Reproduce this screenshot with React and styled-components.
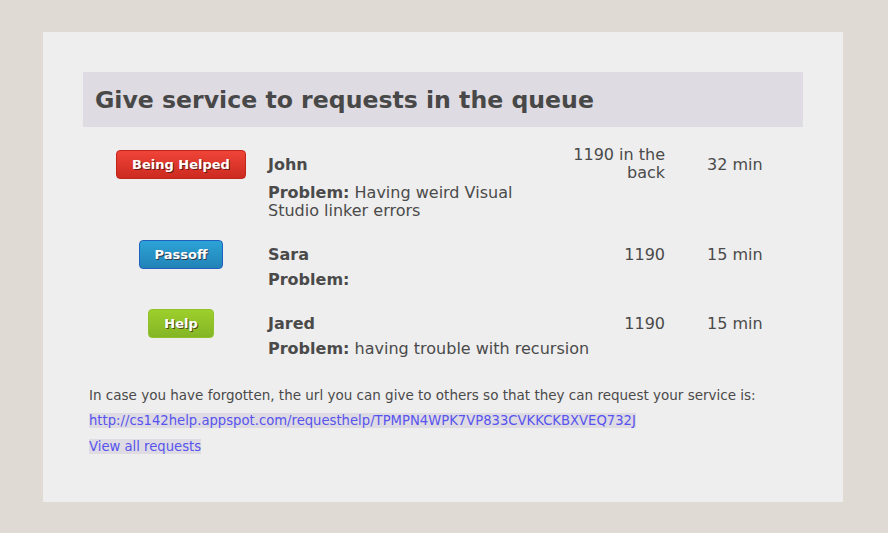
import React from 'react';
import styled, { createGlobalStyle, css } from 'styled-components';

const GlobalStyle = createGlobalStyle`
  body {
    margin: 0;
    background: #dfdbd4;
    font-family: "DejaVu Sans", Verdana, sans-serif;
    color: #4a4a4a;
  }
`;

const requests = [
  { status: 'helped', name: 'John', problem: 'Having weird Visual Studio linker errors', location: '1190 in the back', wait: '32 min', narrow: true },
  { status: 'passoff', name: 'Sara', problem: '', location: '1190', wait: '15 min' },
  { status: 'help', name: 'Jared', problem: 'having trouble with recursion', location: '1190', wait: '15 min' },
];

const labels = { helped: 'Being Helped', passoff: 'Passoff', help: 'Help' };

function App() {
  return (
    <>
      <GlobalStyle />
      <Panel>
        <Heading>Give service to requests in the queue</Heading>

        <Queue>
          {requests.map((r) => (
            <Request key={r.name}>
              <MainLine>
                <ButtonCell>
                  <StatusButton $kind={r.status}>{labels[r.status]}</StatusButton>
                </ButtonCell>
                <Name>{r.name}</Name>
                <Location>{r.location}</Location>
                <Wait>{r.wait}</Wait>
              </MainLine>
              <ProblemLine $narrow={r.narrow}>
                <b>Problem:</b> {r.problem}
              </ProblemLine>
            </Request>
          ))}
        </Queue>

        <Footer>
          <Note>In case you have forgotten, the url you can give to others so that they can request your service is:</Note>
          <Note>
            <Link href="#">http://cs142help.appspot.com/requesthelp/TPMPN4WPK7VP833CVKKCKBXVEQ732J</Link>
          </Note>
          <Note>
            <Link href="#">View all requests</Link>
          </Note>
        </Footer>
      </Panel>
    </>
  );
}

export default App;

const Panel = styled.div`
  box-sizing: border-box;
  width: 800px;
  height: 470px;
  margin: 32px 0 0 43px;
  padding: 40px;
  background: #eeeeee;
`;

const Heading = styled.h1`
  margin: 0;
  height: 55px;
  padding: 0 12px;
  background: #dedbe2;
  font-size: 23.6px;
  line-height: 57px;
  font-weight: bold;
  color: #484848;
`;

const Queue = styled.div`
  display: flex;
  flex-direction: column;
  gap: 20px;
  margin-top: 19px;
`;

const Request = styled.div``;

const MainLine = styled.div`
  display: flex;
  align-items: center;
  font-size: 16px;
`;

const ButtonCell = styled.div`
  box-sizing: border-box;
  width: 185px;
  padding-left: 11px;
  display: flex;
  justify-content: center;
`;

const kinds = {
  helped: css`
    background: linear-gradient(#f04438, #cc2a20);
    border-color: #c0241b;
  `,
  passoff: css`
    background: linear-gradient(#2ca3d6, #2283b7);
    border-color: #2060c0;
  `,
  help: css`
    background: linear-gradient(#9dcf2c, #84b526);
    border-color: #8fc22b;
  `,
};

const StatusButton = styled.button`
  height: 29px;
  padding: 0 15px;
  border: 1px solid;
  border-radius: 4px;
  font-family: "DejaVu Sans", Verdana, sans-serif;
  font-size: 13px;
  font-weight: bold;
  color: #fff;
  text-shadow: 1px 1px 0 rgba(50, 15, 15, 0.7);
  cursor: pointer;
  ${({ $kind }) => kinds[$kind]}
`;

const Name = styled.div`
  width: 262px;
  font-weight: bold;
`;

const Location = styled.div`
  box-sizing: border-box;
  width: 135px;
  padding-left: 38px;
  text-align: right;
  line-height: 18px;
`;

const Wait = styled.div`
  padding-left: 42px;
`;

const ProblemLine = styled.div`
  margin: 2px 0 0 185px;
  font-size: 16px;
  line-height: 18px;
  max-width: ${({ $narrow }) => ($narrow ? '262px' : 'none')};
`;

const Footer = styled.div`
  margin-top: 29px;
  padding-left: 6px;
  font-size: 13.5px;
  line-height: 16px;
`;

const Note = styled.p`
  margin: 0 0 9px;
`;

const Link = styled.a`
  font-size: 13.2px;
  color: #5753ee;
  background: #dedbe2;
  text-decoration: none;
`;
